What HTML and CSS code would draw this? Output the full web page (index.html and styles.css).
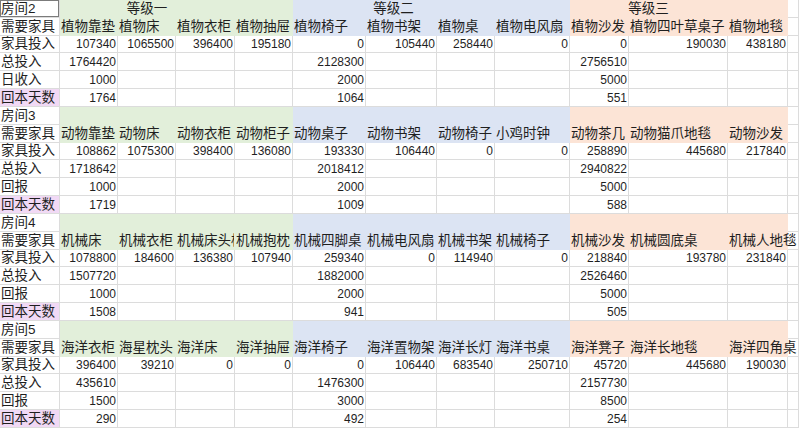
FILE: index.html
```html
<!DOCTYPE html>
<html lang="zh-CN">
<head>
<meta charset="utf-8">
<title>家具投入表</title>
<link rel="stylesheet" href="styles.css">
</head>
<body>
<table class="sheet">
<colgroup>
<col class="c60"><col class="c58"><col class="c58"><col class="c59"><col class="c58"><col class="c73"><col class="c71"><col class="c58"><col class="c75"><col class="c59"><col class="c99"><col class="c60"><col class="c11">
</colgroup>
<tbody>
<!-- 房间2 -->
<tr><td class="sel">房间2</td><td class="g lvl" colspan="3">等级一</td><td class="g"></td><td class="b lvl" colspan="3">等级二</td><td class="b"></td><td class="o lvl" colspan="2">等级三</td><td class="o"></td><td></td></tr>
<tr><td>需要家具</td><td class="g">植物靠垫</td><td class="g">植物床</td><td class="g">植物衣柜</td><td class="g">植物抽屉</td><td class="b">植物椅子</td><td class="b">植物书架</td><td class="b">植物桌</td><td class="b">植物电风扇</td><td class="o">植物沙发</td><td class="o">植物四叶草桌子</td><td class="o">植物地毯</td><td></td></tr>
<tr><td>家具投入</td><td class="n">107340</td><td class="n">1065500</td><td class="n">396400</td><td class="n">195180</td><td class="n">0</td><td class="n">105440</td><td class="n">258440</td><td class="n">0</td><td class="n">0</td><td class="n">190030</td><td class="n">438180</td><td></td></tr>
<tr><td>总投入</td><td class="n">1764420</td><td></td><td></td><td></td><td class="n">2128300</td><td></td><td></td><td></td><td class="n">2756510</td><td></td><td></td><td></td></tr>
<tr><td>日收入</td><td class="n">1000</td><td></td><td></td><td></td><td class="n">2000</td><td></td><td></td><td></td><td class="n">5000</td><td></td><td></td><td></td></tr>
<tr><td class="p">回本天数</td><td class="n">1764</td><td></td><td></td><td></td><td class="n">1064</td><td></td><td></td><td></td><td class="n">551</td><td></td><td></td><td></td></tr>
<!-- 房间3 -->
<tr><td>房间3</td><td class="g"></td><td class="g"></td><td class="g"></td><td class="g"></td><td class="b"></td><td class="b"></td><td class="b"></td><td class="b"></td><td class="o"></td><td class="o"></td><td class="o"></td><td></td></tr>
<tr><td>需要家具</td><td class="g">动物靠垫</td><td class="g">动物床</td><td class="g">动物衣柜</td><td class="g">动物柜子</td><td class="b">动物桌子</td><td class="b">动物书架</td><td class="b">动物椅子</td><td class="b">小鸡时钟</td><td class="o">动物茶几</td><td class="o">动物猫爪地毯</td><td class="o">动物沙发</td><td></td></tr>
<tr><td>家具投入</td><td class="n">108862</td><td class="n">1075300</td><td class="n">398400</td><td class="n">136080</td><td class="n">193330</td><td class="n">106440</td><td class="n">0</td><td class="n">0</td><td class="n">258890</td><td class="n">445680</td><td class="n">217840</td><td></td></tr>
<tr><td>总投入</td><td class="n">1718642</td><td></td><td></td><td></td><td class="n">2018412</td><td></td><td></td><td></td><td class="n">2940822</td><td></td><td></td><td></td></tr>
<tr><td>回报</td><td class="n">1000</td><td></td><td></td><td></td><td class="n">2000</td><td></td><td></td><td></td><td class="n">5000</td><td></td><td></td><td></td></tr>
<tr><td class="p">回本天数</td><td class="n">1719</td><td></td><td></td><td></td><td class="n">1009</td><td></td><td></td><td></td><td class="n">588</td><td></td><td></td><td></td></tr>
<!-- 房间4 -->
<tr><td>房间4</td><td class="g"></td><td class="g"></td><td class="g"></td><td class="g"></td><td class="b"></td><td class="b"></td><td class="b"></td><td class="b"></td><td class="o"></td><td class="o"></td><td class="o"></td><td></td></tr>
<tr><td>需要家具</td><td class="g">机械床</td><td class="g">机械衣柜</td><td class="g clip">机械床头柜</td><td class="g">机械抱枕</td><td class="b">机械四脚桌</td><td class="b">机械电风扇</td><td class="b">机械书架</td><td class="b">机械椅子</td><td class="o">机械沙发</td><td class="o">机械圆底桌</td><td class="o">机械人地毯</td><td></td></tr>
<tr><td>家具投入</td><td class="n">1078800</td><td class="n">184600</td><td class="n">136380</td><td class="n">107940</td><td class="n">259340</td><td class="n">0</td><td class="n">114940</td><td class="n">0</td><td class="n">218840</td><td class="n">193780</td><td class="n">231840</td><td></td></tr>
<tr><td>总投入</td><td class="n">1507720</td><td></td><td></td><td></td><td class="n">1882000</td><td></td><td></td><td></td><td class="n">2526460</td><td></td><td></td><td></td></tr>
<tr><td>回报</td><td class="n">1000</td><td></td><td></td><td></td><td class="n">2000</td><td></td><td></td><td></td><td class="n">5000</td><td></td><td></td><td></td></tr>
<tr><td class="p">回本天数</td><td class="n">1508</td><td></td><td></td><td></td><td class="n">941</td><td></td><td></td><td></td><td class="n">505</td><td></td><td></td><td></td></tr>
<!-- 房间5 -->
<tr><td>房间5</td><td class="g"></td><td class="g"></td><td class="g"></td><td class="g"></td><td class="b"></td><td class="b"></td><td class="b"></td><td class="b"></td><td class="o"></td><td class="o"></td><td class="o"></td><td></td></tr>
<tr><td>需要家具</td><td class="g">海洋衣柜</td><td class="g">海星枕头</td><td class="g">海洋床</td><td class="g">海洋抽屉</td><td class="b">海洋椅子</td><td class="b">海洋置物架</td><td class="b">海洋长灯</td><td class="b">海洋书桌</td><td class="o">海洋凳子</td><td class="o">海洋长地毯</td><td class="o">海洋四角桌</td><td></td></tr>
<tr><td>家具投入</td><td class="n">396400</td><td class="n">39210</td><td class="n">0</td><td class="n">0</td><td class="n">0</td><td class="n">106440</td><td class="n">683540</td><td class="n">250710</td><td class="n">45720</td><td class="n">445680</td><td class="n">190030</td><td></td></tr>
<tr><td>总投入</td><td class="n">435610</td><td></td><td></td><td></td><td class="n">1476300</td><td></td><td></td><td></td><td class="n">2157730</td><td></td><td></td><td></td></tr>
<tr><td>回报</td><td class="n">1500</td><td></td><td></td><td></td><td class="n">3000</td><td></td><td></td><td></td><td class="n">8500</td><td></td><td></td><td></td></tr>
<tr><td class="p">回本天数</td><td class="n">290</td><td></td><td></td><td></td><td class="n">492</td><td></td><td></td><td></td><td class="n">254</td><td></td><td></td><td></td></tr>
</tbody>
</table>
</body>
</html>
```

FILE: styles.css
```css
html, body {
  margin: 0;
  padding: 0;
  background: #ffffff;
}

.sheet {
  border-collapse: separate;
  border-spacing: 0;
  table-layout: fixed;
  width: 799px;
  font-family: "Liberation Sans", "Noto Sans CJK SC", sans-serif;
  color: #1f1f1f;
}

.c60 { width: 60px; }
.c58 { width: 58px; }
.c59 { width: 59px; }
.c73 { width: 73px; }
.c71 { width: 71px; }
.c75 { width: 75px; }
.c99 { width: 99px; }
.c11 { width: 11px; }

.sheet tr {
  height: 17.83px;
}

.sheet td {
  box-sizing: border-box;
  padding: 0 1px 0 1px;
  border-right: 1px solid #dcdcdc;
  border-bottom: 1px solid #dcdcdc;
  font-size: 13.5px;
  line-height: 16px;
  white-space: nowrap;
  overflow: visible;
  vertical-align: bottom;
  text-align: left;
}

.sheet td.n {
  font-size: 12px;
  text-align: right;
  padding-right: 1px;
}

.sheet td.lvl {
  text-align: center;
}

.sheet td.clip {
  overflow: hidden;
  text-overflow: clip;
}

.sheet td.g {
  background: #e2efda;
  border-color: #e2efda;
}

.sheet td.b {
  background: #dce4f3;
  border-color: #dce4f3;
}

.sheet td.o {
  background: #fce4d6;
  border-color: #fce4d6;
}

.sheet td.p {
  background: #f1d9f5;
}

.sheet td.sel {
  box-shadow: inset 0 0 0 1px #7b7b7b;
}
```
